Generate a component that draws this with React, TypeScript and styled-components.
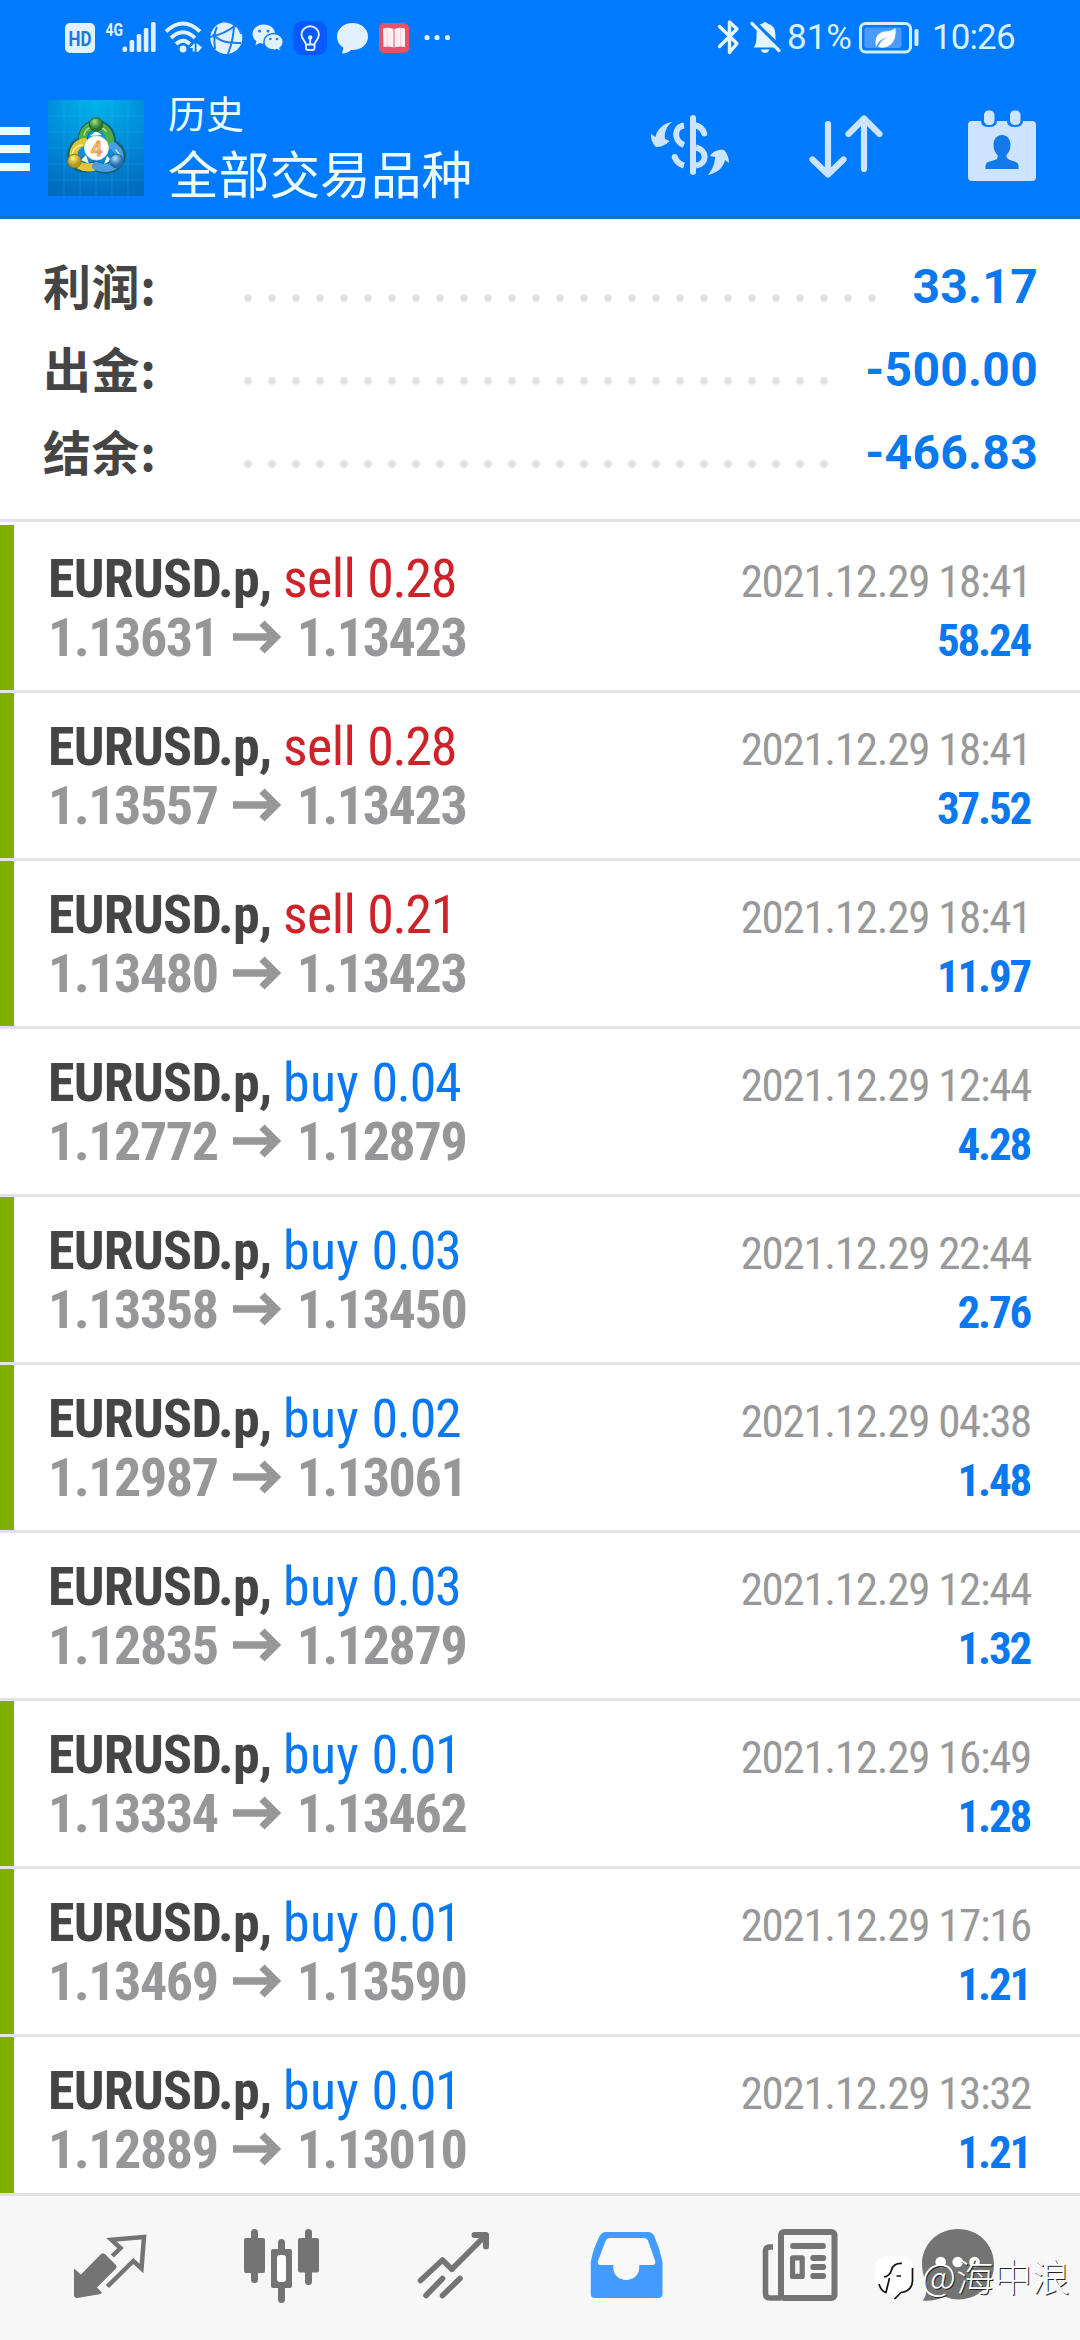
import React from "react";
import styled, { createGlobalStyle } from "styled-components";

const latin = `Roboto, "Liberation Sans", "Noto Sans CJK SC", sans-serif`;
const condensed = `"Roboto Condensed", Roboto, "Liberation Sans Narrow", sans-serif`;
const cjk = `"Noto Sans CJK SC", "Noto Sans", sans-serif`;

const blue = "#007aff";
const textBlue = "#0a78ee";
const line = "#e2e3e4";

const GlobalStyle = createGlobalStyle`
  * { box-sizing: border-box; }
  body { margin: 0; background: #fff; }
`;

const Screen = styled.div`
  position: relative;
  display: flex;
  flex-direction: column;
  width: 1080px;
  height: 2340px;
  overflow: hidden;
  background: #fff;
  font-family: ${latin};
`;

const Header = styled.header`
  flex: none;
  height: 219px;
  background: ${blue};
  border-bottom: 3px solid #176fb4;
`;

const StatusBar = styled.div`
  display: flex;
  align-items: center;
  height: 76px;
  padding: 0 0 0 60px;
`;

const StatusLeft = styled.svg`
  flex: none;
  margin-right: 253px;
`;

const StatusText = styled.span<{ $width: number; $spacing?: number }>`
  flex: none;
  width: ${(p) => p.$width}px;
  font-size: 35px;
  line-height: 76px;
  letter-spacing: ${(p) => p.$spacing ?? 0}px;
  color: #d8f1ff;
  white-space: nowrap;
`;

const StatusGlyph = styled.svg`
  flex: none;
`;

const TitleBar = styled.div`
  display: flex;
  align-items: center;
  height: 140px;
`;

const Menu = styled.button`
  display: flex;
  flex-direction: column;
  gap: 10px;
  width: 30px;
  margin: 6px 18px 0 0;
  padding: 0;
  border: 0;
  background: none;
`;

const MenuBar = styled.span`
  height: 8px;
  background: #e6ffff;
`;

const Logo = styled.svg`
  flex: none;
  margin: 3px 24px 0 0;
`;

const Titles = styled.div`
  display: flex;
  flex-direction: column;
  width: 480px;
  color: #ecfdff;
  font-family: ${cjk};
`;

const Subtitle = styled.span`
  font-size: 38px;
  line-height: 52px;
`;

const Title = styled.span`
  font-size: 50.7px;
  line-height: 68px;
`;

const Action = styled.svg<{ $gap?: number }>`
  flex: none;
  margin: -2px ${(p) => p.$gap ?? 0}px 0 0;
`;

const Summary = styled.section`
  flex: none;
  height: 303px;
  padding: 26px 42px 0 43px;
  border-bottom: 3px solid ${line};
`;

const SummaryRow = styled.div`
  display: flex;
  align-items: center;
  height: 83px;
  font-size: 48px;
  font-weight: 700;
`;

const SummaryLabel = styled.span`
  width: 193px;
  padding-bottom: 5px;
  color: #454545;
  font-family: ${cjk};
  letter-spacing: 0.6px;
  line-height: 78px;
`;

const Leader = styled.span<{ $dots: number }>`
  width: ${(p) => p.$dots * 24}px;
  height: 8px;
  margin-top: 23px;
  background: radial-gradient(circle, #e1e1e1 3.4px, transparent 4.2px) 0 0 / 24px 8px repeat-x;
`;

const SummaryValue = styled.span`
  margin-left: auto;
  color: ${textBlue};
  letter-spacing: 0.3px;
`;

const Deals = styled.main`
  flex: 1;
  min-height: 0;
  padding-top: 3px;
  overflow: hidden;
`;

const Deal = styled.article<{ $marked: boolean }>`
  height: 168px;
  padding: 24px 48px 0 48px;
  border-bottom: 3px solid ${line};
  background: linear-gradient(${(p) => (p.$marked ? "#7fb000, #7fb000" : "#fff, #fff")}) 0 0 / 14px 165px no-repeat;
  font-family: ${condensed};
  font-stretch: condensed;
`;

const DealLine = styled.div`
  display: flex;
  justify-content: space-between;
  align-items: baseline;
  height: 59px;
  font-size: 54px;
  line-height: 59px;
  white-space: pre;
`;

const Symbol = styled.b`
  color: #454545;
  letter-spacing: -0.75px;
`;

const Side = styled.span<{ $sell: boolean }>`
  color: ${(p) => (p.$sell ? "#cc2228" : textBlue)};
  letter-spacing: ${(p) => (p.$sell ? -0.6 : 0.2)}px;
`;

const Lot = styled.span`
  letter-spacing: -1.35px;
`;

const Prices = styled.b`
  color: #97979a;
  letter-spacing: -1.4px;
`;

const ArrowSvg = styled.svg`
  margin: 0 15px 0 14px;
  vertical-align: 1px;
`;

const Time = styled.time`
  margin-right: 1px;
  color: #999;
  font-size: 45px;
  letter-spacing: -1.3px;
`;

const Profit = styled.b`
  margin-right: 2px;
  color: ${textBlue};
  font-size: 45px;
  letter-spacing: -2.2px;
`;

const TabBar = styled.nav`
  flex: none;
  display: flex;
  gap: 92px;
  height: 147px;
  padding: 29px 0 0 70px;
  background: #f7f7f7;
  border-top: 3px solid #e0e0e0;
`;

const TabIcon = styled.svg`
  flex: none;
  overflow: visible;
`;

const Watermark = styled.div`
  position: absolute;
  right: 10px;
  bottom: 37px;
  display: flex;
  align-items: center;
  gap: 6px;
  color: #fff;
  font-family: ${cjk};
  font-size: 38px;
  font-weight: 300;
  line-height: 56px;
  text-shadow: 1px 1px 0.5px #222;
`;

const WatermarkLogo = styled.svg`
  margin-top: 6px;
`;

const StatusIcons = () => (
  <StatusLeft width="400" height="40" viewBox="60 18 400 40" fill="#e2f1ff">
    <rect x="65" y="23" width="30" height="30" rx="5" />
    <text x="80" y="45.5" fontSize="20" fontWeight="700" textAnchor="middle" fill="#2277d8" fontFamily="Roboto" textLength="23" lengthAdjust="spacingAndGlyphs">HD</text>
    <text x="105.5" y="36" fontSize="19" fontWeight="700" fontFamily="Roboto" textLength="17.5" lengthAdjust="spacingAndGlyphs">4G</text>
    <rect x="122.5" y="46.5" width="4.6" height="5.5" rx="2" />
    <rect x="129.6" y="40" width="4.6" height="12" rx="1.5" />
    <rect x="136.7" y="34" width="4.6" height="18" rx="1.5" />
    <rect x="143.8" y="28" width="4.6" height="24" rx="1.5" />
    <rect x="151" y="22" width="4.6" height="30" rx="1.5" />
    <g fill="none" stroke="#e2f1ff" strokeWidth="4">
      <path d="M166 31.5Q183 15.5 200 31.5" />
      <path d="M171 38Q183 26.500 195 38" />
      <path d="M176 44Q183 37.500 190 44" />
    </g>
    <circle cx="183" cy="49" r="3.4" />
    <path d="M189.500 48l5.200-5v8.500h-2v-3.500zM196.500 43l5.500 4.500-3.500 4-2 .5z" />
    <circle cx="226.300" cy="38" r="16" />
    <g fill="none" stroke="#1480f8" strokeWidth="2">
      <path d="M210 37Q225 34 236 25M222 21Q233 22 236 27M234 24Q234 38 228 54M213 34Q220 44 241 43M217 27Q213 34 215 49" />
      <path d="M234 24Q240 28 241 34" />
    </g>
    <path d="M264 24.500c-6.500 0-11.500 4-11.500 9.500 0 3 1.500 5.500 4 7.200l-1.200 4 4.500-2.300c1.300.4 2.700.6 4.200.6 6.300 0 11-4 11-9.500s-4.700-9.500-11-9.500z" />
    <path d="M273.500 33.500c-5.300 0-9.600 3.600-9.600 8.200s4.300 8.300 9.600 8.300c1.300 0 2.500-.2 3.600-.6l3.900 2.100-1-3.500c2-1.500 3.200-3.700 3.200-6.300 0-4.600-4.400-8.200-9.700-8.200z" stroke="#1480f8" strokeWidth="1.4" />
    <g fill="#1480f8"><circle cx="259.500" cy="31" r="1.500" /><circle cx="268" cy="31" r="1.500" /><circle cx="270.300" cy="39" r="1.300" /><circle cx="277" cy="39" r="1.300" /></g>
    <rect x="293.500" y="21" width="33.500" height="34" rx="9" fill="#0a58ff" />
    <g fill="none" stroke="#ddeeff" strokeWidth="1.900" strokeLinejoin="round">
      <path d="M306 44.500C305.500 41 301.500 39.500 301.500 34.500a8.700 8.200 0 0 1 17.400 0C318.900 39.500 315 41 314.500 44.500zM306 44.500v3.500q0 2 2 2h4.500q2 0 2-2v-3.500M310.200 44v-5" />
    </g>
    <circle cx="310.200" cy="37.500" r="2.200" />
    <path d="M352.500 23c-8.800 0-15.500 6-15.500 13.500 0 5 2.700 9 6.500 11.300L342 53.500c4 0 7-1.300 9-3.500 9.700.5 17-5 17-13.500C368 29 361.500 23 352.500 23z" />
    <rect x="379" y="23" width="30" height="30" rx="5" fill="#e95266" />
    <path d="M383 28.500q5-1.500 10.500.5v18.500q-5-1.500-10-.5zM394.500 29q5-2 10.500-.5v18.500q-5-1-10.500.5z" fill="#fff0f4" />
    <path d="M387 28v18M400.500 28v18" stroke="#ffd0d8" strokeWidth="1" />
    <circle cx="427" cy="37.500" r="2.600" /><circle cx="437" cy="37.500" r="2.600" /><circle cx="447.500" cy="37.500" r="2.600" />
  </StatusLeft>
);

const AppLogo = () => (
  <Logo width="96" height="96" viewBox="0 0 96 96">
    <defs>
      <radialGradient id="sky" cx="50%" cy="0%" r="100%"><stop offset="0" stopColor="#00b4ea" /><stop offset=".5" stopColor="#0090dc" /><stop offset="1" stopColor="#006cc0" /></radialGradient>
      <radialGradient id="green" cx="40%" cy="30%"><stop offset="0" stopColor="#a5dc8a" /><stop offset="1" stopColor="#257a2c" /></radialGradient>
      <radialGradient id="gold" cx="40%" cy="30%"><stop offset="0" stopColor="#fff08a" /><stop offset="1" stopColor="#b59a1c" /></radialGradient>
      <radialGradient id="azure" cx="40%" cy="30%"><stop offset="0" stopColor="#b5e4ff" /><stop offset="1" stopColor="#2470b0" /></radialGradient>
    </defs>
    <rect width="96" height="96" fill="url(#sky)" />
    <path d="M16 0v96M32 0v96M48 0v96M64 0v96M80 0v96M0 16h96M0 32h96M0 48h96M0 64h96M0 80h96" stroke="#35b8ef" strokeWidth=".7" opacity=".4" />
    <g stroke="#1d5550" strokeWidth="10" strokeLinecap="round" fill="none" opacity=".75">
      <path d="M35 42C32 19 65 19 63 44M44 67C20 73 18 45 36 41M66 45C82 55 68 76 47 66" />
    </g>
    <g fill="none" strokeWidth="8" strokeLinecap="round">
      <path d="M35 40C34 20 64 20 62 45" stroke="#4eae45" />
      <path d="M45 67C22 71 20 46 36 42" stroke="#e0c535" />
      <path d="M65 46C80 56 67 74 48 66" stroke="#4b9fe0" />
      <path d="M36 35C38 25 52 24 58 31" stroke="#b8dc9a" strokeWidth="1.500" />
      <path d="M24 57C24 49 30 45 34 45" stroke="#fff3a0" strokeWidth="1.500" />
      <path d="M68 50C74 56 72 63 67 66" stroke="#b8e0ff" strokeWidth="1.500" />
    </g>
    <path d="M42 36L48 31L54 35zM33 60L38 55L41 64zM56 64L59 56L64 60z" fill="#f4fbe8" />
    <circle cx="48" cy="24.500" r="6.800" fill="url(#green)" stroke="#24652b" />
    <circle cx="26.500" cy="61" r="6.800" fill="url(#gold)" stroke="#8b7a1e" />
    <circle cx="68.500" cy="61" r="6.800" fill="url(#azure)" stroke="#256297" />
    <circle cx="48.500" cy="48" r="12" fill="#fff" stroke="#d8dfd2" />
    <text x="48.500" y="55.500" fontFamily="Roboto" fontSize="21" fontWeight="500" textAnchor="middle" fill="#f8c88c" stroke="#ef9a40" strokeWidth=".9">4</text>
  </Logo>
);

const HeaderActions = () => (
  <>
    <Action $gap={74} width="84" height="76" viewBox="648 107 84 76" fill="#cce4ff">
      <rect x="690" y="115" width="6" height="60" rx="3" />
      <g fill="none" stroke="#cce4ff" strokeWidth="6">
        <path d="M684 125.500C673.500 127 673.500 141 684 145" />
        <path d="M674.700 157Q677 163.500 684 165.500" />
        <path d="M696 125.500Q702 127 704.300 133.500" strokeLinecap="round" />
        <path d="M696 147.500C707.500 150 707.500 164 696 165.500" />
      </g>
      <circle cx="674.700" cy="157" r="3" />
      <path d="M672 122C664 123 657 129 655.500 137L651 134C650.500 138 652.500 144 656 147C661 147 666 145 669.500 141L665 139C664 132 667 126 672 122z" />
      <path d="M708 175C716 173 723 169 725 160L729 163C729 158 727 153 724 150C719 149 713 151 710 156L715 157C715 164 712 170 708 175z" />
    </Action>
    <Action $gap={80} width="80" height="76" viewBox="806 107 80 76" fill="none" stroke="#cce4ff" strokeWidth="6.200" strokeLinecap="round" strokeLinejoin="round">
      <path d="M828 124V174M812.500 159.500L828 174.500L843.500 159.500M864 169V119M848.500 134L864 118.500L879.500 134" />
    </Action>
    <Action width="72" height="76" viewBox="966 107 72 76" fill="#cce4ff">
      <rect x="968" y="121" width="68" height="60" rx="4" />
      <path d="M981 118H997V121Q997 127 989 127T981 121zM1007 118H1023V121Q1023 127 1015 127T1007 121z" fill="#007aff" />
      <rect x="984" y="110.500" width="10.500" height="14.500" rx="4.500" />
      <rect x="1010" y="110.500" width="10.500" height="14.500" rx="4.500" />
      <path d="M1002 135C1007 135 1010.500 139 1010.500 145Q1010.500 151 1006.500 155Q1006 158.500 1010 160L1016 162Q1019 163.500 1018.500 169H985.500Q985 163.500 988 162L995 160Q998.500 158.500 997.500 155Q993.500 151 993.500 145C993.500 139 997 135 1002 135z" fill="#1378e8" />
    </Action>
  </>
);

const Arrow = () => (
  <ArrowSvg width="50" height="36" viewBox="0 0 50 36" fill="none" stroke="#97979a" strokeWidth="7.400">
    <path d="M1 18H44M30 4L44 18L30 32" />
  </ArrowSvg>
);

const summary = [
  { label: "利润:", dots: 27, value: "33.17" },
  { label: "出金:", dots: 25, value: "-500.00" },
  { label: "结余:", dots: 25, value: "-466.83" },
];

const deals = [
  { side: "sell", lot: "0.28", from: "1.13631", to: "1.13423", time: "18:41", profit: "58.24", marked: true },
  { side: "sell", lot: "0.28", from: "1.13557", to: "1.13423", time: "18:41", profit: "37.52", marked: true },
  { side: "sell", lot: "0.21", from: "1.13480", to: "1.13423", time: "18:41", profit: "11.97", marked: true },
  { side: "buy", lot: "0.04", from: "1.12772", to: "1.12879", time: "12:44", profit: "4.28", marked: false },
  { side: "buy", lot: "0.03", from: "1.13358", to: "1.13450", time: "22:44", profit: "2.76", marked: true },
  { side: "buy", lot: "0.02", from: "1.12987", to: "1.13061", time: "04:38", profit: "1.48", marked: true },
  { side: "buy", lot: "0.03", from: "1.12835", to: "1.12879", time: "12:44", profit: "1.32", marked: false },
  { side: "buy", lot: "0.01", from: "1.13334", to: "1.13462", time: "16:49", profit: "1.28", marked: true },
  { side: "buy", lot: "0.01", from: "1.13469", to: "1.13590", time: "17:16", profit: "1.21", marked: true },
  { side: "buy", lot: "0.01", from: "1.12889", to: "1.13010", time: "13:32", profit: "1.21", marked: true },
];

const Tabs = () => (
  <TabBar>
    <TabIcon width="80" height="80" fill="#747474">
      <path d="M4 43.500L11 49.500L30 30Q33 26.500 36 30L45.500 39.500Q47.500 41.700 45.500 44L27 62.500L31.500 67Q32 69 29.500 69.300L7 73Q4 73 4 70z" />
      <path d="M42.300 31L50.500 23L41.500 14.800L74 12L71.500 43.500L63.300 36L37.400 61.500" fill="none" stroke="#747474" strokeWidth="4.500" />
    </TabIcon>
    <TabIcon width="80" height="80" fill="#747474">
      <rect x="9" y="4" width="7" height="54" rx="3.500" /><rect x="2" y="13" width="21" height="35" rx="2" />
      <rect x="36" y="14" width="7" height="64" rx="3.500" /><rect x="29" y="24" width="21" height="39" rx="2" />
      <rect x="35" y="30" width="9" height="27" rx="3" fill="#fff" />
      <rect x="63" y="4" width="7" height="56" rx="3.500" /><rect x="56" y="13" width="21" height="34.500" rx="2" />
    </TabIcon>
    <TabIcon width="80" height="80" fill="none" stroke="#747474" strokeWidth="5.600" strokeLinecap="round">
      <path d="M6.500 55.500L28.500 35L37.800 44.300L71 11" strokeLinejoin="round" />
      <path d="M60.500 10H72V21.500" strokeWidth="6" strokeLinejoin="round" />
      <path d="M28.500 53.500L12 70.500M46 53.500L28.500 70.500" />
    </TabIcon>
    <TabIcon width="80" height="80">
      <path fill="#429bff" fillRule="evenodd" d="M20 7H62Q66.500 7 68.500 11.500Q74 24 76.500 37V69Q76.500 73 72.500 73H9Q4.800 73 4.800 69V37Q7 24 13.500 11.500Q15.500 7 20 7z" />
      <path fill="#f9f9f9" d="M24 13H58Q61 13 62 15.500L69.200 36Q70 40 66.500 40H53.200V42.500C53.200 59 27.300 59 27.300 42.500V40H14.500Q11 40 12 36L19.500 16Q21 13 24 13z" />
    </TabIcon>
    <TabIcon width="80" height="80" fill="none" stroke="#747474">
      <rect x="23" y="7" width="53.500" height="66" rx="3" strokeWidth="6" />
      <path d="M15 22H11Q7.500 22.500 7.500 26V68.500Q7.500 73 12 73H23" strokeWidth="5.600" />
      <path d="M35 21H65M55.200 33H65.200M55.200 42H65.200M55.200 51H65.200" strokeWidth="5.800" strokeLinecap="round" />
      <rect x="34.600" y="32.800" width="9.600" height="18.600" strokeWidth="5.200" strokeLinejoin="round" />
    </TabIcon>
    <TabIcon width="80" height="80" fill="#747474">
      <path d="M28 4C48 4 64 19 64 39.500S48 74.500 28 74.500Q21 74.500 14.500 71.500Q3 77 -7.500 75.500Q-2.500 71 -3.500 57Q-8 49 -8 39.500C-8 19 8 4 28 4z" />
      <g fill="#fff"><circle cx="10.700" cy="37" r="5.300" /><circle cx="27.700" cy="37" r="5.300" /><circle cx="44.500" cy="37" r="5.300" /></g>
    </TabIcon>
  </TabBar>
);

export default function App() {
  return (
    <Screen>
      <GlobalStyle />
      <Header>
        <StatusBar>
          <StatusIcons />
          <StatusGlyph width="74" height="40" viewBox="713 18 74 40">
            <path d="M719.500 26.500L737 43.500L729.500 52.500V22L737 29L719.500 46.500" fill="none" stroke="#e2f7ff" strokeWidth="3.400" strokeLinejoin="round" strokeLinecap="round" />
            <path d="M753.500 47.500Q756.500 44 756.500 37Q756 24 762.500 23.500Q765 20.500 767.500 23.500Q776 25.500 775.500 37V44L778 47.500z" fill="#e2f7ff" />
            <path d="M760.500 49.500H769.500Q768 53 765 53T760.500 49.500z" fill="#e2f7ff" />
            <path d="M753 21L782 49" stroke={blue} strokeWidth="4" />
            <path d="M752 23.500L779 50.500" stroke="#e2f7ff" strokeWidth="3.200" strokeLinecap="round" />
          </StatusGlyph>
          <StatusText $width={69}>81%</StatusText>
          <StatusGlyph width="76" height="40" viewBox="856 18 76 40">
            <rect x="860.500" y="23.500" width="50" height="28.500" rx="5" fill="none" stroke="#d0f0ff" strokeWidth="3" />
            <rect x="864.500" y="27.500" width="37" height="20.500" rx="2" fill="#4a9bff" />
            <rect x="914.500" y="29" width="4" height="17" rx="1.500" fill="#d0f0ff" />
            <path d="M876 47Q873.500 34 884 31.500Q891 31.500 895.500 28Q897 45 884 47.500Q880 48 878 46.500Q881 40 888 37Q879 39 876 47z" fill="#fff" />
          </StatusGlyph>
          <StatusText $width={86} $spacing={-0.9}>10:26</StatusText>
        </StatusBar>
        <TitleBar>
          <Menu aria-label="menu"><MenuBar /><MenuBar /><MenuBar /></Menu>
          <AppLogo />
          <Titles>
            <Subtitle>历史</Subtitle>
            <Title>全部交易品种</Title>
          </Titles>
          <HeaderActions />
        </TitleBar>
      </Header>
      <Summary>
        {summary.map((s) => (
          <SummaryRow key={s.label}>
            <SummaryLabel>{s.label}</SummaryLabel>
            <Leader $dots={s.dots} />
            <SummaryValue>{s.value}</SummaryValue>
          </SummaryRow>
        ))}
      </Summary>
      <Deals>
        {deals.map((d, i) => (
          <Deal key={i} $marked={d.marked}>
            <DealLine>
              <span><Symbol>EURUSD.p, </Symbol><Side $sell={d.side === "sell"}>{d.side} <Lot>{d.lot}</Lot></Side></span>
              <Time>2021.12.29 {d.time}</Time>
            </DealLine>
            <DealLine>
              <Prices>{d.from}<Arrow />{d.to}</Prices>
              <Profit>{d.profit}</Profit>
            </DealLine>
          </Deal>
        ))}
      </Deals>
      <Tabs />
      <Watermark>
        <WatermarkLogo width="40" height="44" viewBox="0 0 40 44">
          <path d="M13 0H25Q38 0 38 13V24Q37 35 25 37L20 42L17 36Q14 38 11 37L3 30Q0 25 0 13Q0 0 13 0z" fill="#fff" />
          <path d="M9 21Q15 20 16.500 14Q18.500 7 27 7.500M21.500 20H26M37.500 12V25Q37 35 26 36.500L19.500 43M4 28Q6 35 11 36.500L14.500 22" fill="none" stroke="#111" strokeWidth="1.700" />
        </WatermarkLogo>
        <span>@海中浪</span>
      </Watermark>
    </Screen>
  );
}
